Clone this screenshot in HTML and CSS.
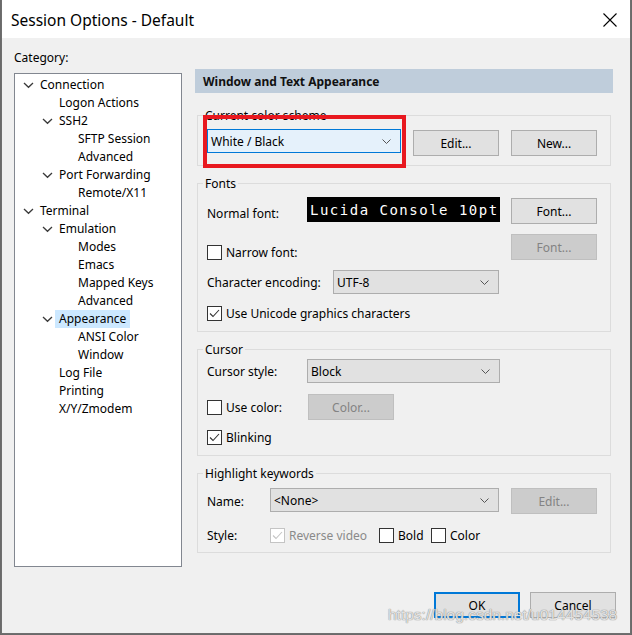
FILE: index.html
```html
<!DOCTYPE html>
<html>
<head>
<meta charset="utf-8">
<link rel="stylesheet" href="styles.css">
</head>
<body>
<div class="window">
  <div class="titlebar">
    <span class="title">Session Options - Default</span>
    <svg class="close" width="14" height="14" viewBox="0 0 14 14"><path d="M0.5 0.5 L13.5 13.5 M13.5 0.5 L0.5 13.5" stroke="#000" stroke-width="1.1" fill="none"/></svg>
  </div>
  <div class="content">
    <div class="left">
      <div class="cat-label">Category:</div>
      <div class="tree">
        <div class="node l0"><span class="tw"><svg width="13" height="18"><path d="M1 7 L5.5 11.3 L10 7" stroke="#3a3a3a" stroke-width="1.3" fill="none"/></svg></span><span class="lbl">Connection</span></div>
        <div class="node l1"><span class="tw"></span><span class="lbl">Logon Actions</span></div>
        <div class="node l1"><span class="tw"><svg width="13" height="18"><path d="M1 7 L5.5 11.3 L10 7" stroke="#3a3a3a" stroke-width="1.3" fill="none"/></svg></span><span class="lbl">SSH2</span></div>
        <div class="node l2"><span class="tw"></span><span class="lbl">SFTP Session</span></div>
        <div class="node l2"><span class="tw"></span><span class="lbl">Advanced</span></div>
        <div class="node l1"><span class="tw"><svg width="13" height="18"><path d="M1 7 L5.5 11.3 L10 7" stroke="#3a3a3a" stroke-width="1.3" fill="none"/></svg></span><span class="lbl">Port Forwarding</span></div>
        <div class="node l2"><span class="tw"></span><span class="lbl">Remote/X11</span></div>
        <div class="node l0"><span class="tw"><svg width="13" height="18"><path d="M1 7 L5.5 11.3 L10 7" stroke="#3a3a3a" stroke-width="1.3" fill="none"/></svg></span><span class="lbl">Terminal</span></div>
        <div class="node l1"><span class="tw"><svg width="13" height="18"><path d="M1 7 L5.5 11.3 L10 7" stroke="#3a3a3a" stroke-width="1.3" fill="none"/></svg></span><span class="lbl">Emulation</span></div>
        <div class="node l2"><span class="tw"></span><span class="lbl">Modes</span></div>
        <div class="node l2"><span class="tw"></span><span class="lbl">Emacs</span></div>
        <div class="node l2"><span class="tw"></span><span class="lbl">Mapped Keys</span></div>
        <div class="node l2"><span class="tw"></span><span class="lbl">Advanced</span></div>
        <div class="node l1"><span class="tw"><svg width="13" height="18"><path d="M1 7 L5.5 11.3 L10 7" stroke="#3a3a3a" stroke-width="1.3" fill="none"/></svg></span><span class="lbl selected">Appearance</span></div>
        <div class="node l2"><span class="tw"></span><span class="lbl">ANSI Color</span></div>
        <div class="node l2"><span class="tw"></span><span class="lbl">Window</span></div>
        <div class="node l1"><span class="tw"></span><span class="lbl">Log File</span></div>
        <div class="node l1"><span class="tw"></span><span class="lbl">Printing</span></div>
        <div class="node l1"><span class="tw"></span><span class="lbl">X/Y/Zmodem</span></div>
      </div>
    </div>
    <div class="right">
      <div class="header">Window and Text Appearance</div>

      <div class="group g1">
        <div class="legend">Current color scheme</div>
        <div class="row r-scheme">
          <div class="select focused w-scheme"><span>White / Black</span><svg width="9" height="5"><path d="M0.5 0.5 L4.5 4.5 L8.5 0.5" stroke="#555" fill="none"/></svg></div>
          <div class="btn b-edit">Edit...</div>
          <div class="btn b-new">New...</div>
        </div>
        <div class="annot"></div>
      </div>

      <div class="group g2">
        <div class="legend">Fonts</div>
        <div class="row r-font">
          <div class="lab w-100 lab-font">Normal font:</div>
          <div class="fontbox">Lucida Console 10pt</div>
          <div class="btn push">Font...</div>
        </div>
        <div class="row r-narrow">
          <div class="chk-item narrow-chk"><span class="box"></span><span>Narrow font:</span></div>
          <div class="btn disabled push">Font...</div>
        </div>
        <div class="row r-enc">
          <div class="lab w-126">Character encoding:</div>
          <div class="select w-enc"><span>UTF-8</span><svg width="9" height="5"><path d="M0.5 0.5 L4.5 4.5 L8.5 0.5" stroke="#555" fill="none"/></svg></div>
        </div>
        <div class="row r-chk r-uni">
          <div class="chk-item"><span class="box"><svg width="13" height="13"><path d="M2 6.5 L5 9.5 L11 3" stroke="#333" stroke-width="1.1" fill="none"/></svg></span><span>Use Unicode graphics characters</span></div>
        </div>
      </div>

      <div class="group g3">
        <div class="legend">Cursor</div>
        <div class="row r-cstyle">
          <div class="lab w-100">Cursor style:</div>
          <div class="select w-cur"><span>Block</span><svg width="9" height="5"><path d="M0.5 0.5 L4.5 4.5 L8.5 0.5" stroke="#555" fill="none"/></svg></div>
        </div>
        <div class="row r-ucolor">
          <div class="chk-item w-101"><span class="box"></span><span>Use color:</span></div>
          <div class="btn disabled">Color...</div>
        </div>
        <div class="row r-chk r-blink">
          <div class="chk-item"><span class="box"><svg width="13" height="13"><path d="M2 6.5 L5 9.5 L11 3" stroke="#333" stroke-width="1.1" fill="none"/></svg></span><span>Blinking</span></div>
        </div>
      </div>

      <div class="group g4">
        <div class="legend">Highlight keywords</div>
        <div class="row r-name">
          <div class="lab w-63">Name:</div>
          <div class="select w-name"><span>&lt;None&gt;</span><svg width="9" height="5"><path d="M0.5 0.5 L4.5 4.5 L8.5 0.5" stroke="#555" fill="none"/></svg></div>
          <div class="btn disabled push">Edit...</div>
        </div>
        <div class="row r-chk r-style">
          <div class="lab w-63">Style:</div>
          <div class="chk-item dis w-109"><span class="box"><svg width="13" height="13"><path d="M2 6.5 L5 9.5 L11 3" stroke="#c4c4c4" stroke-width="1.1" fill="none"/></svg></span><span>Reverse video</span></div>
          <div class="chk-item w-52"><span class="box"></span><span>Bold</span></div>
          <div class="chk-item"><span class="box"></span><span>Color</span></div>
        </div>
      </div>
    </div>
  </div>
  <div class="footer">
    <div class="btn default">OK</div>
    <div class="btn">Cancel</div>
  </div>
  <div class="watermark">https://blog.csdn.net/u014454538</div>
</div>
</body>
</html>
```
FILE: styles.css
```css
* { box-sizing: border-box; }
html, body { margin: 0; padding: 0; }
body {
  background: #6a6a6a;
  font-family: "Noto Sans", sans-serif;
  font-size: 12px;
  color: #000;
  height: 635px;
  overflow: hidden;
}
.window {
  position: relative;
  width: 630px;
  height: 634px;
  margin-left: 1px;
  background: #f0f0f0;
  border-left: 1px solid #6f6f6f;
  border-right: 1px solid #6f6f6f;
  border-bottom: 1px solid #6f6f6f;
  display: flex;
  flex-direction: column;
}
.titlebar {
  height: 38px;
  background: #fff;
  display: flex;
  align-items: center;
  justify-content: space-between;
  padding: 2px 13px 0 9px;
  flex: none;
}
.title { font-size: 15.5px; line-height: 20px; }
.close { margin-top: -1px; }

.content { display: flex; padding-left: 12px; flex: none; }
.left { width: 168px; padding-top: 12px; display: flex; flex-direction: column; }
.cat-label { line-height: 16px; height: 16px; }
.tree {
  margin-top: 7px;
  height: 494px;
  background: #fff;
  border: 1px solid #828790;
  padding-top: 2px;
}
.node { display: flex; height: 18px; line-height: 18px; white-space: nowrap; }
.node.l0 { padding-left: 8px; }
.node.l1 { padding-left: 27px; }
.node.l2 { padding-left: 46px; }
.tw { width: 13px; height: 18px; flex: none; }
.tw svg { display: block; }
.lbl { padding: 0 4px; }
.lbl.selected { background: #cce8ff; }

.right { width: 418px; margin-left: 13px; padding-top: 31px; }
.header {
  height: 24px;
  line-height: 25px;
  background: #bfcddb;
  font-weight: bold;
  padding-left: 8px;
  color: #111;
}
.group {
  position: relative;
  margin: 17px 2px 0;
  border: 1px solid #dcdcdc;
  padding: 0 13px 10px 9px;
}
.g1 { margin-top: 22px; padding-bottom: 9px; }
.g4 { padding-bottom: 9px; }
.legend {
  width: max-content;
  height: 16px;
  line-height: 16px;
  margin: -8px 0 0 -4px;
  padding: 0 2px;
  background: #f0f0f0;
}
.row { display: flex; align-items: flex-start; }
.r-scheme { margin-top: 5px; height: 27px; }
.r-font { margin-top: 5px; height: 27px; }
.r-narrow { margin-top: 10px; height: 26px; }
.r-enc { margin-top: 10px; height: 24px; align-items: center; }
.r-uni { margin-top: 11px; }
.r-cstyle { margin-top: 1px; height: 24px; align-items: center; }
.r-ucolor { margin-top: 11px; height: 26px; align-items: center; }
.r-blink { margin-top: 9px; }
.r-name { margin-top: 6px; height: 26px; align-items: flex-start; }
.r-style { margin-top: 13px; }
.r-chk { height: 16px; align-items: center; }

.lab { line-height: 16px; padding-top: 1px; white-space: nowrap; flex: none; }
.w-100 { width: 100px; }
.w-101 { width: 101px; }
.w-126 { width: 126px; }
.w-63 { width: 63px; }
.w-109 { width: 109px; }
.w-52 { width: 52px; }
.lab-font { margin-top: 8px; }
.r-name .lab { margin-top: 5px; }

.select {
  height: 24px;
  background: #e1e1e1;
  border: 1px solid #adadad;
  display: flex;
  align-items: center;
  justify-content: space-between;
  padding: 1px 9px 0 3px;
  flex: none;
  line-height: 16px;
}
.select svg { display: block; margin-top: -1px; }
.select.focused { background: #e5f1fb; border-color: #0078d7; }
.w-scheme { width: 194px; }
.w-enc { width: 166px; }
.w-cur { width: 193px; }
.w-name { width: 229px; }

.btn {
  width: 86px;
  height: 26px;
  background: #e1e1e1;
  border: 1px solid #adadad;
  display: flex;
  align-items: center;
  justify-content: center;
  flex: none;
  line-height: 16px;
  padding-top: 1px;
}
.btn.disabled { background: #cccccc; border-color: #bfbfbf; color: #838383; }
.btn.push { margin-left: auto; }
.b-edit { margin-left: 12px; margin-top: 1px; }
.b-new { margin-left: 12px; margin-top: 1px; }
.r-font .btn { margin-top: 1px; }

.fontbox {
  width: 193px;
  height: 25px;
  background: #000;
  color: #fff;
  font-family: "DejaVu Sans Mono", monospace;
  font-size: 14px;
  letter-spacing: 1.5px;
  line-height: 26px;
  padding-left: 3px;
  white-space: nowrap;
  overflow: hidden;
  flex: none;
}

.chk-item { display: flex; align-items: center; height: 16px; white-space: nowrap; flex: none; }
.chk-item > span:last-child { padding-top: 1px; }
.narrow-chk { margin-top: 10px; }
.box {
  width: 15px;
  height: 15px;
  border: 1px solid #333;
  background: #fff;
  margin-right: 4px;
  flex: none;
}
.box svg { display: block; }
.chk-item.dis { color: #8a8a8a; }
.chk-item.dis .box { border-color: #c4c4c4; }

.annot {
  position: absolute;
  left: 5px;
  top: -1px;
  width: 203px;
  height: 53px;
  border: 4px solid #e8181f;
}

.footer {
  display: flex;
  justify-content: flex-end;
  gap: 10px;
  padding-right: 14px;
  margin-top: 25px;
}
.btn.default { border: 2px solid #0078d7; }

.watermark {
  position: absolute;
  left: 386px;
  top: 605px;
  font-family: "Liberation Sans", sans-serif;
  font-size: 15.5px;
  line-height: 20px;
  color: rgba(255, 255, 255, 0.75);
  text-shadow: 0 0 1px #8a8a8a, 0 0 1px #8a8a8a;
  white-space: nowrap;
}
```
